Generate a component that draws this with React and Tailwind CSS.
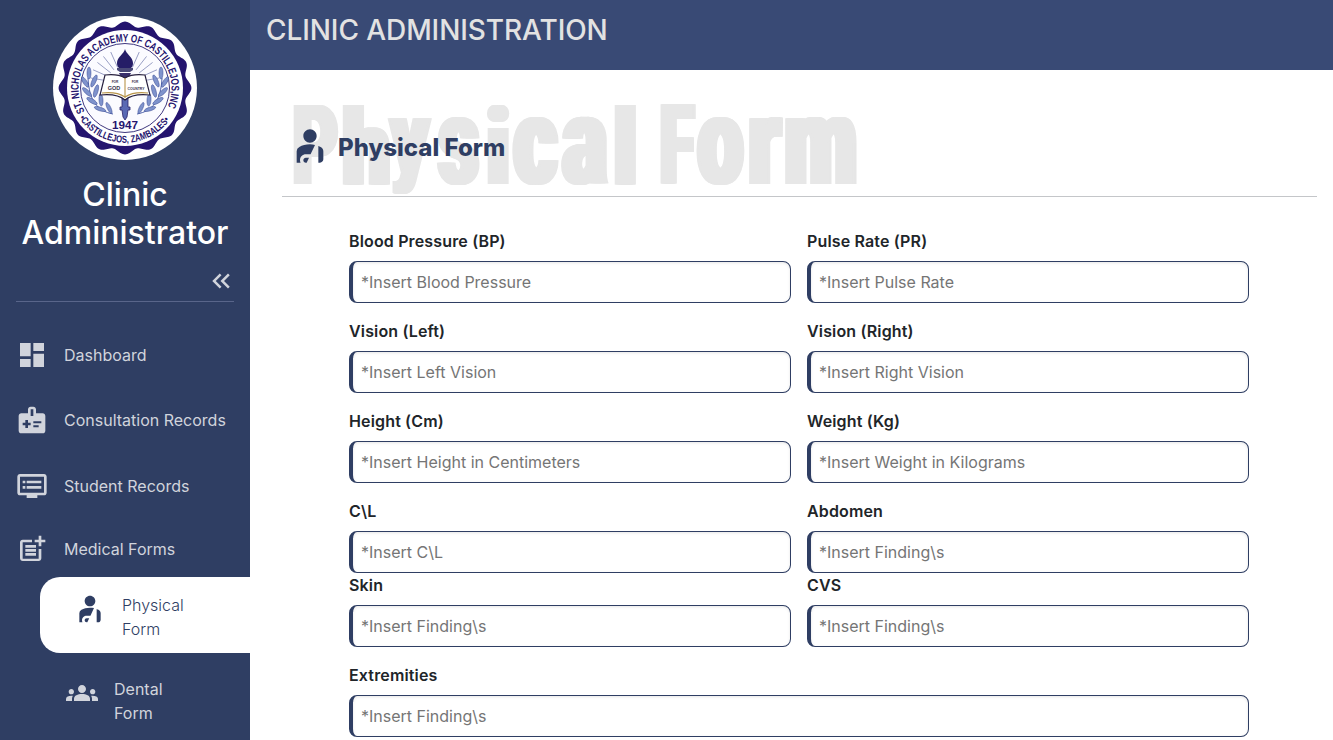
import React from "react";
import {
  MdDashboard,
  MdMedicalInformation,
  MdDvr,
  MdPostAdd,
  MdPersonalInjury,
  MdGroups,
  MdKeyboardDoubleArrowLeft,
} from "react-icons/md";

const scallop = (() => {
  let d = "";
  for (let i = 0; i <= 360; i += 1) {
    const a = (i * Math.PI) / 180;
    const r = 64 + 2.4 * Math.cos(16 * a);
    d += `${i ? "L" : "M"}${(72 + r * Math.sin(a)).toFixed(2)} ${(72 - r * Math.cos(a)).toFixed(2)}`;
  }
  return d + "Z";
})();

const rays = [-80, -66, -52, -38, -24, 24, 38, 52, 66, 80];

function Laurel() {
  return (
    <g>
      <path d="M60 98C44 95 36 84 35 62" fill="none" stroke="#4a5fa8" strokeWidth="1" />
      <g fill="#7f93cc" stroke="#3a4a94" strokeWidth="0.5">
        <ellipse cx="36" cy="57" rx="2" ry="6" />
        <ellipse cx="32" cy="66" rx="2" ry="6" transform="rotate(-32 32 66)" />
        <ellipse cx="41" cy="65" rx="2" ry="6.5" transform="rotate(24 41 65)" />
        <ellipse cx="34" cy="76" rx="2" ry="6" transform="rotate(-46 34 76)" />
        <ellipse cx="43" cy="75" rx="2" ry="6.5" transform="rotate(16 43 75)" />
        <ellipse cx="39" cy="85" rx="2" ry="6" transform="rotate(-58 39 85)" />
        <ellipse cx="48" cy="84" rx="2" ry="6" transform="rotate(-4 48 84)" />
        <ellipse cx="47" cy="93" rx="1.8" ry="6" transform="rotate(-72 47 93)" />
        <ellipse cx="56" cy="92" rx="1.8" ry="6" transform="rotate(-26 56 92)" />
      </g>
    </g>
  );
}

function Seal() {
  return (
    <svg width="144" height="144" viewBox="0 0 144 144" className="block">
      <defs>
        <path id="seal-top" d="M31.7 95.3A46.5 46.5 0 1 1 112.3 95.3" />
        <path id="seal-bottom" d="M26.1 102A55 55 0 0 0 117.9 102" />
      </defs>
      <circle cx="72" cy="72" r="72" fill="#fff" />
      <path d={scallop} fill="#24146e" />
      <circle cx="72" cy="72" r="58" fill="#fff" />
      <circle cx="72" cy="72" r="44.5" fill="#fbfbff" stroke="#2a2370" strokeWidth="0.9" />
      {rays.map((a) => (
        <path key={a} d="M72 50V33" stroke="#8b92bd" strokeWidth="0.8" transform={`rotate(${a} 72 68)`} />
      ))}
      <Laurel />
      <g transform="matrix(-1 0 0 1 144 0)">
        <Laurel />
      </g>
      <path d="M72 33c1 5 8 8 8 14 0 3-1 4-2 5h-12c-1-1-2-2-2-5 0-6 7-9 8-14Z" fill="#251d67" />
      <path d="M64 52h16v2l-3 2H67l-3-2Z" fill="#4a4a78" />
      <path d="M66 57h12l-3 7h-6Z" fill="#39306c" />
      <path d="M69 79h6v12h2v3h-2l-1 7-2 3-2-3-1-7h-2v-3h2Z" fill="#5a69b4" stroke="#292268" strokeWidth="0.8" />
      <path d="M52 59c8-1 15 0 20 3 5-3 12-4 20-3l5 20c-9-1-18-1-25 5-7-6-16-6-25-5Z" fill="#fff" stroke="#28213f" strokeWidth="1.2" />
      <path d="M72 62v20M49 77c9-1 17 0 23 4 6-4 14-5 23-4" fill="none" stroke="#b8954a" strokeWidth="1.1" />
      <g fill="#39304b" fontFamily="Liberation Sans, sans-serif" fontWeight="700">
        <text x="62" y="67" fontSize="3.2" textAnchor="middle">FOR</text>
        <text x="82" y="67" fontSize="3.2" textAnchor="middle">FOR</text>
        <text x="61" y="74" fontSize="5.5" textAnchor="middle">GOD</text>
        <text x="83" y="73.5" fontSize="4" textAnchor="middle" textLength="17" lengthAdjust="spacingAndGlyphs">COUNTRY</text>
      </g>
      <g fill="#24146e" fontFamily="Liberation Sans, sans-serif" fontWeight="700">
        <text x="72" y="113" fontSize="10.5" textAnchor="middle" textLength="26" lengthAdjust="spacingAndGlyphs">1947</text>
        <text fontFamily="Liberation Sans Narrow, Liberation Sans, sans-serif" fontSize="11">
          <textPath href="#seal-top" textLength="189" lengthAdjust="spacingAndGlyphs">ST. NICHOLAS ACADEMY OF CASTILLEJOS,INC</textPath>
        </text>
        <text fontFamily="Liberation Sans Narrow, Liberation Sans, sans-serif" fontSize="10">
          <textPath href="#seal-bottom" textLength="106" lengthAdjust="spacingAndGlyphs">•CASTILLEJOS, ZAMBALES•</textPath>
        </text>
      </g>
    </svg>
  );
}

const nav = [
  { label: "Dashboard", Icon: MdDashboard, cls: "h-[65px]" },
  { label: "Consultation Records", Icon: MdMedicalInformation, cls: "mb-0.5 h-16" },
  { label: "Student Records", Icon: MdDvr, cls: "mb-0.5 h-16" },
  { label: "Medical Forms", Icon: MdPostAdd, cls: "mb-0.5 h-[58px]" },
];

// Condensed poster lettering: slot width and squeeze for each glyph.
const poster = [
  ["P", "w-[50px]", "scale-x-[0.62]"],
  ["h", "w-[48px]", "scale-x-[0.75] scale-y-[0.95]"],
  ["y", "w-[48px]", "scale-x-[0.65] scale-y-[0.92] -translate-y-3"],
  ["s", "w-[48px]", "scale-x-[0.69] scale-y-[1.12]"],
  ["i", "w-[27px]", "scale-x-[0.73] scale-y-[0.95]"],
  ["c", "w-[49px]", "scale-x-[0.74] scale-y-[1.12]"],
  ["a", "w-[51px]", "scale-x-[0.74] scale-y-[1.12]"],
  ["l", "w-[27px]", "scale-x-[0.74] scale-y-[0.95]"],
  [" ", "w-[19px]", ""],
  ["F", "w-[38px]", "scale-x-[0.56]"],
  ["o", "w-[51px]", "scale-x-[0.72] scale-y-[1.12]"],
  ["r", "w-[36px]", "scale-x-[0.74] scale-y-[1.12]"],
  ["m", "w-[70px]", "scale-x-[0.75] scale-y-[1.12]"],
];

function Watermark() {
  return (
    <div className="absolute top-[21px] left-[11px] flex font-['Roboto'] text-[111px] leading-[111px] font-black whitespace-pre text-[#e7e7e7] [text-shadow:2px_0_#e7e7e7,-2px_0_#e7e7e7,4px_0_#e7e7e7,-4px_0_#e7e7e7,5px_0_#e7e7e7,-5px_0_#e7e7e7]">
      {poster.map(([glyph, slot, squeeze], i) => (
        <span key={i} className={slot}>
          <span className={`inline-block origin-[0_93px] ${squeeze}`}>{glyph}</span>
        </span>
      ))}
    </div>
  );
}

function Field({ label, placeholder, className = "" }) {
  return (
    <div className={className}>
      <label className="mb-2 block text-base leading-6 font-semibold tracking-[0.15px] text-[#212529]">{label}</label>
      <input
        className="block h-[42px] w-full rounded-lg border border-l-4 border-[#2f3e63] bg-white px-2 text-base text-[#212529] shadow-[inset_0_1px_3px_rgba(0,0,0,0.1)] outline-none placeholder:text-[#757575]"
        placeholder={placeholder}
      />
    </div>
  );
}

export default function App() {
  return (
    <div className="flex h-[740px] w-full overflow-hidden bg-white font-['Inter',sans-serif]">
      <aside className="flex w-[250px] shrink-0 flex-col bg-[#2f3e63] text-[#d1d4dc]">
        <div className="flex justify-center pt-4">
          <Seal />
        </div>
        <h2 className="mt-4 text-center text-[32px] leading-[38.4px] font-medium text-white">Clinic Administrator</h2>
        <div className="mx-4 flex h-[49px] items-center justify-end border-b border-[#59658a] pt-[9px]">
          <MdKeyboardDoubleArrowLeft className="-mr-0.5 size-[30px]" />
        </div>
        <nav className="pt-[21px]">
          {nav.map(({ label, Icon, cls }) => (
            <a key={label} className={`flex items-center gap-4 pl-4 text-base ${cls}`}>
              <Icon className="size-8 shrink-0" />
              <span>{label}</span>
            </a>
          ))}
          <a className="-mt-[3px] ml-10 flex h-[76px] items-start rounded-l-[20px] bg-white pt-4 pl-[34px] text-base leading-6 font-light text-[#2f3e63]">
            <MdPersonalInjury className="size-8 shrink-0" />
            <span className="ml-4 w-20">Physical Form</span>
          </a>
          <a className="mt-6 flex items-start pl-[66px] text-base leading-6">
            <MdGroups className="size-8 shrink-0" />
            <span className="ml-4 w-16">Dental Form</span>
          </a>
        </nav>
      </aside>
      <main className="min-w-0 flex-1">
        <header className="flex h-[70px] items-start bg-[#394a75] pt-[13px] pl-4">
          <h1 className="text-[28px] leading-[34px] font-medium tracking-[-0.08px] text-[#e2e2e2]">CLINIC ADMINISTRATION</h1>
        </header>
        <section className="mr-4 ml-8">
          <div className="relative flex h-[127px] items-center border-b border-[#c4c6c9] pt-[29px] pl-2">
            <Watermark />
            <MdPersonalInjury className="relative size-10 -translate-y-0.5 text-[#2f3e63]" />
            <span className="relative ml-2 text-2xl font-extrabold text-[#2f3e63]">Physical Form</span>
          </div>
          <form className="mx-[67px] mt-8 grid w-[900px] grid-cols-2 gap-x-4">
            <Field className="mb-4" label="Blood Pressure (BP)" placeholder="*Insert Blood Pressure" />
            <Field className="mb-4" label="Pulse Rate (PR)" placeholder="*Insert Pulse Rate" />
            <Field className="mb-4" label="Vision (Left)" placeholder="*Insert Left Vision" />
            <Field className="mb-4" label="Vision (Right)" placeholder="*Insert Right Vision" />
            <Field className="mb-4" label="Height (Cm)" placeholder="*Insert Height in Centimeters" />
            <Field className="mb-4" label="Weight (Kg)" placeholder="*Insert Weight in Kilograms" />
            <Field label="C\L" placeholder="*Insert C\L" />
            <Field label="Abdomen" placeholder="*Insert Finding\s" />
            <Field className="mb-4" label="Skin" placeholder="*Insert Finding\s" />
            <Field className="mb-4" label="CVS" placeholder="*Insert Finding\s" />
            <Field className="col-span-2" label="Extremities" placeholder="*Insert Finding\s" />
          </form>
        </section>
      </main>
    </div>
  );
}
